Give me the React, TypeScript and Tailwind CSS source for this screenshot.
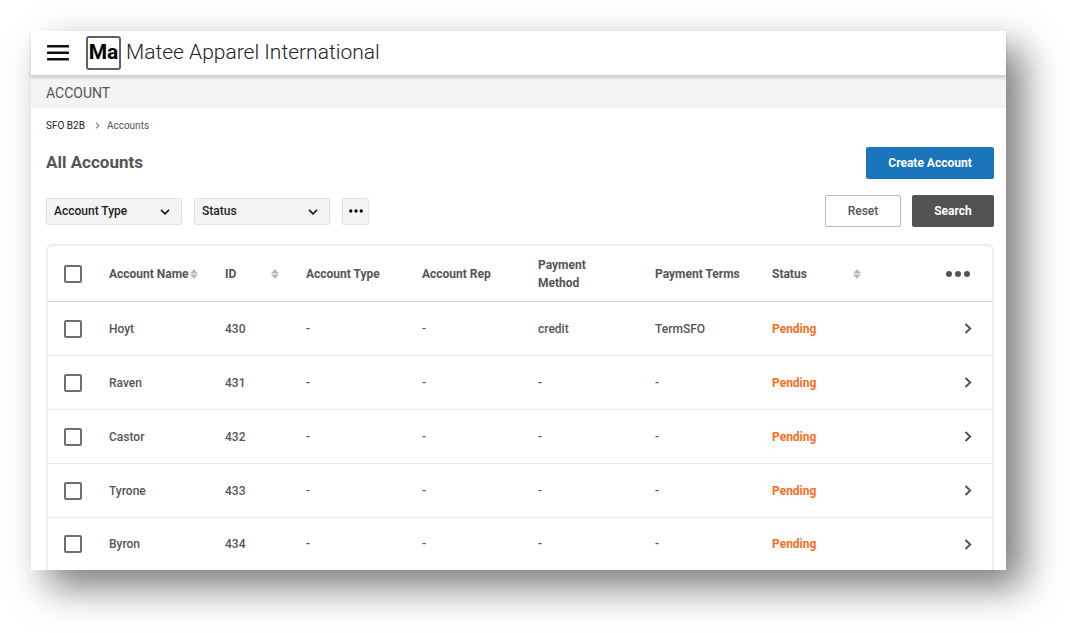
type Account = {
  name: string;
  id: number;
  method: string;
  terms: string;
};

const accounts: Account[] = [
  { name: "Hoyt", id: 430, method: "credit", terms: "TermSFO" },
  { name: "Raven", id: 431, method: "-", terms: "-" },
  { name: "Castor", id: 432, method: "-", terms: "-" },
  { name: "Tyrone", id: 433, method: "-", terms: "-" },
  { name: "Byron", id: 434, method: "-", terms: "-" },
];

function SortIcon() {
  return (
    <svg className="h-[10px] w-2 shrink-0" viewBox="0 0 8 10" fill="#b9b9b9" aria-hidden="true">
      <path d="M4 0 8 4.6H0z" />
      <path d="M0 5.4h8L4 10z" />
    </svg>
  );
}

function SortableHeader({ label }: { label: string }) {
  return (
    <button type="button" className="flex w-[89px] items-center justify-between whitespace-nowrap">
      <span className="w-[81px] text-left">{label}</span>
      <SortIcon />
    </button>
  );
}

function Dots({ className }: { className: string }) {
  return (
    <svg className={className} viewBox="0 0 24 6" fill="currentColor" aria-hidden="true">
      <circle cx="3" cy="3" r="3" />
      <circle cx="12" cy="3" r="3" />
      <circle cx="21" cy="3" r="3" />
    </svg>
  );
}

function Checkbox({ label }: { label: string }) {
  return (
    <input
      type="checkbox"
      aria-label={label}
      className="block size-[18px] appearance-none rounded-[2px] border-2 border-[#707070] bg-white checked:bg-[#666]"
    />
  );
}

function Filter({ label }: { label: string }) {
  return (
    <div className="relative w-[136px]">
      <select
        aria-label={label}
        className="h-[27px] w-full appearance-none rounded-[2px] border border-[#e2e2e2] bg-[#f4f4f4] pl-[7px] pr-8 text-xs font-medium text-[#222]"
      >
        <option>{label}</option>
      </select>
      <svg
        className="pointer-events-none absolute right-3 top-[11px] h-[6px] w-[10px]"
        viewBox="0 0 10 6"
        fill="none"
        stroke="#222"
        strokeWidth="1.8"
        aria-hidden="true"
      >
        <path d="M1 .8 5 4.8 9 .8" />
      </svg>
    </div>
  );
}

function AccountRow({ account, last }: { account: Account; last: boolean }) {
  return (
    <tr className={last ? "h-[52px]" : "h-[54px] [&>td]:border-b [&>td]:border-[#e8e8ea]"}>
      <td className="pl-4">
        <Checkbox label={`Select ${account.name}`} />
      </td>
      <td>{account.name}</td>
      <td>{account.id}</td>
      <td>-</td>
      <td>-</td>
      <td>{account.method}</td>
      <td>{account.terms}</td>
      <td className="font-bold text-[#fb6d1d]">Pending</td>
      <td className="pr-[20px]">
        <button type="button" aria-label={`Open ${account.name}`} className="ml-auto block">
          <svg className="h-[11px] w-[8px]" viewBox="0 0 8 11" fill="none" stroke="#505050" strokeWidth="1.9" aria-hidden="true">
            <path d="M1.5 1 6.2 5.5 1.5 10" />
          </svg>
        </button>
      </td>
    </tr>
  );
}

export default function App() {
  return (
    <div className="bg-white pb-[63px] pl-[31px] pr-[64px] pt-[31px] font-['Roboto',sans-serif] text-[#555]">
      <div className="bg-white shadow-[17px_17px_36px_rgba(0,0,0,0.52)]">
        <header className="relative flex h-11 items-center bg-white pl-4 shadow-[0_3px_3px_rgba(0,0,0,0.16)]">
          <button type="button" aria-label="Menu">
            <svg className="h-4 w-[22px]" viewBox="0 0 22 16" fill="#111" aria-hidden="true">
              <rect width="22" height="2.6" rx=".5" />
              <rect y="6.5" width="22" height="2.6" rx=".5" />
              <rect y="13" width="22" height="2.6" rx=".5" />
            </svg>
          </button>
          <span className="ml-[17px] flex h-[34px] w-[35px] items-center justify-center rounded-[3px] border-2 border-[#606060] text-[21px] font-bold text-black">
            Ma
          </span>
          <span className="ml-[5px] whitespace-nowrap text-[21px] font-light text-[#222]">
            Matee Apparel International
          </span>
        </header>

        <div className="flex h-[33px] items-center bg-[#f4f4f4] pl-[15px] pt-[3px] text-sm">ACCOUNT</div>

        <main className="pl-[15px] pr-3">
          <nav aria-label="Breadcrumb" className="flex h-[33px] items-center pt-px text-[10px]">
            <a href="#" className="text-[#222]">SFO B2B</a>
            <svg className="ml-[10px] mr-[7px] h-[7px] w-[5px]" viewBox="0 0 5 7" fill="none" stroke="#444" aria-hidden="true">
              <path d="M.8.5 4 3.5.8 6.5" />
            </svg>
            <span>Accounts</span>
          </nav>

          <div className="mt-[6px] flex items-center justify-between">
            <h1 className="text-[17px] font-bold">All Accounts</h1>
            <button type="button" className="h-8 w-32 rounded-[2px] bg-[#1b75bc] text-xs font-bold text-white">
              Create Account
            </button>
          </div>

          <div className="mt-4 flex items-center justify-between">
            <div className="flex items-center gap-3">
              <Filter label="Account Type" />
              <Filter label="Status" />
              <button
                type="button"
                aria-label="More filters"
                className="flex size-[27px] items-center justify-center rounded-[2px] border border-[#e2e2e2] bg-[#f4f4f4] text-[#111]"
              >
                <Dots className="h-1 w-[14px]" />
              </button>
            </div>
            <div className="flex gap-[11px]">
              <button type="button" className="h-8 w-[76px] rounded-[2px] border border-[#bbb] bg-white text-xs font-medium">
                Reset
              </button>
              <button type="button" className="h-8 w-[82px] rounded-[2px] bg-[#525252] text-xs font-bold text-white">
                Search
              </button>
            </div>
          </div>

          <div className="mt-[17px] rounded-t-md border-2 border-b-0 border-[#eeeeee]">
            <table className="w-full table-fixed border-separate border-spacing-0 text-left text-xs font-medium [&_td]:py-0 [&_th]:py-0">
              <colgroup>
                <col className="w-[61px]" />
                <col className="w-[116px]" />
                <col className="w-[81px]" />
                <col className="w-[116px]" />
                <col className="w-[116px]" />
                <col className="w-[117px]" />
                <col className="w-[117px]" />
                <col className="w-[117px]" />
                <col className="w-[103px]" />
              </colgroup>
              <thead>
                <tr className="h-14 leading-[18px] [&>th]:border-b [&>th]:border-[#d2d2d2] [&>th]:font-bold">
                  <th className="pl-4">
                    <Checkbox label="Select all accounts" />
                  </th>
                  <th>
                    <SortableHeader label="Account Name" />
                  </th>
                  <th>
                    <button type="button" className="flex w-[54px] items-center justify-between">
                      ID
                      <SortIcon />
                    </button>
                  </th>
                  <th>Account Type</th>
                  <th>Account Rep</th>
                  <th className="pr-10">Payment Method</th>
                  <th>Payment Terms</th>
                  <th>
                    <SortableHeader label="Status" />
                  </th>
                  <th className="pr-[22px]">
                    <button type="button" aria-label="Table options" className="ml-auto block">
                      <Dots className="h-[6px] w-6" />
                    </button>
                  </th>
                </tr>
              </thead>
              <tbody>
                {accounts.map((account, i) => (
                  <AccountRow key={account.id} account={account} last={i === accounts.length - 1} />
                ))}
              </tbody>
            </table>
          </div>
        </main>
      </div>
    </div>
  );
}
